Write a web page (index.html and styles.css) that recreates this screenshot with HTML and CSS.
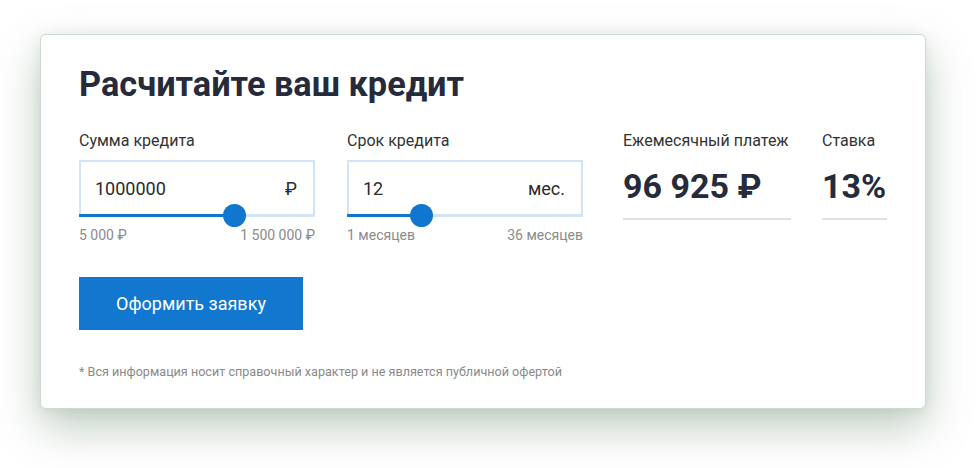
FILE: index.html
```html
<!DOCTYPE html>
<html lang="ru">
<head>
<meta charset="utf-8">
<title>Расчитайте ваш кредит</title>
<link rel="stylesheet" href="styles.css">
</head>
<body>
<div class="page">
  <section class="card">
    <h1 class="title">Расчитайте ваш кредит</h1>
    <div class="row">
      <div class="col col-input">
        <div class="label">Сумма кредита</div>
        <div class="field">
          <span class="value">1000000</span>
          <span class="unit">₽</span>
          <div class="track"><div class="fill" style="width:66.56%"></div></div>
          <div class="thumb" style="left:66.56%"></div>
        </div>
        <div class="range"><span>5 000 ₽</span><span>1 500 000 ₽</span></div>
      </div>
      <div class="col col-input">
        <div class="label">Срок кредита</div>
        <div class="field">
          <span class="value">12</span>
          <span class="unit">мес.</span>
          <div class="track"><div class="fill" style="width:31.43%"></div></div>
          <div class="thumb" style="left:31.43%"></div>
        </div>
        <div class="range"><span>1 месяцев</span><span>36 месяцев</span></div>
      </div>
      <div class="col col-result col-pay">
        <div class="label">Ежемесячный платеж</div>
        <div class="result">96 925 ₽</div>
      </div>
      <div class="col col-result col-rate">
        <div class="label">Ставка</div>
        <div class="result">13%</div>
      </div>
    </div>
    <button class="btn" type="button">Оформить заявку</button>
    <p class="note">* Вся информация носит справочный характер и не является публичной офертой</p>
  </section>
</div>
</body>
</html>
```
FILE: styles.css
```css
* { box-sizing: border-box; }
html, body { margin: 0; padding: 0; background: #ffffff; }
body { font-family: Roboto, "Noto Sans", Arial, sans-serif; color: #2b2b2b; }

.page {
  min-height: 468px;
  padding: 34px 0 60px 40px;
}

.card {
  width: 886px;
  height: 375px;
  background: #fff;
  border: 1px solid #cfd9d0;
  border-radius: 6px;
  box-shadow: 0 18px 44px rgba(65, 105, 70, 0.34), 0 2px 12px rgba(65, 105, 70, 0.1);
  padding: 29px 0 0 38px;
}

.title {
  margin: 0;
  font-size: 34.3px;
  line-height: 40px;
  font-weight: 700;
  color: #262b3b;
}

.row {
  display: flex;
  margin-top: 27px;
}

.col-input { width: 236px; margin-right: 32px; }
.col-input + .col-input { margin-right: 40px; }
.col-pay { width: 168px; margin-right: 31px; }
.col-rate { width: 65px; }

.label {
  font-size: 16px;
  line-height: 19px;
  color: #333333;
  white-space: nowrap;
}

.field {
  position: relative;
  margin-top: 10px;
  height: 57px;
  border: 2px solid #d2e5f6;
  border-bottom: none;
  display: flex;
  align-items: center;
  justify-content: space-between;
  padding: 0 16px 3px 14px;
  font-size: 18px;
  color: #2b2b2b;
}

.track {
  position: absolute;
  left: -2px;
  right: -2px;
  bottom: 0;
  height: 3px;
  background: #d2e5f6;
}
.fill { height: 100%; background: #1176d0; }

.thumb {
  position: absolute;
  bottom: -10px;
  width: 23px;
  height: 23px;
  margin-left: -12px;
  border-radius: 50%;
  background: #1176d0;
}

.range {
  display: flex;
  justify-content: space-between;
  margin-top: 10px;
  font-size: 14px;
  line-height: 16px;
  color: #8b8b8b;
  white-space: nowrap;
}

.result {
  margin-top: 16px;
  padding-bottom: 12px;
  border-bottom: 2px solid #e2e2e2;
  font-size: 34px;
  line-height: 40px;
  font-weight: 700;
  color: #262b3b;
  white-space: nowrap;
}

.btn {
  display: block;
  margin-top: 34px;
  width: 224px;
  height: 53px;
  border: none;
  border-radius: 0;
  background: #1177cf;
  color: #fff;
  font-family: Roboto, "Noto Sans", Arial, sans-serif;
  font-size: 18px;
  cursor: pointer;
}

.note {
  margin: 34px 0 0;
  font-size: 12.6px;
  line-height: 15px;
  color: #8a8a8a;
  white-space: nowrap;
}
```
